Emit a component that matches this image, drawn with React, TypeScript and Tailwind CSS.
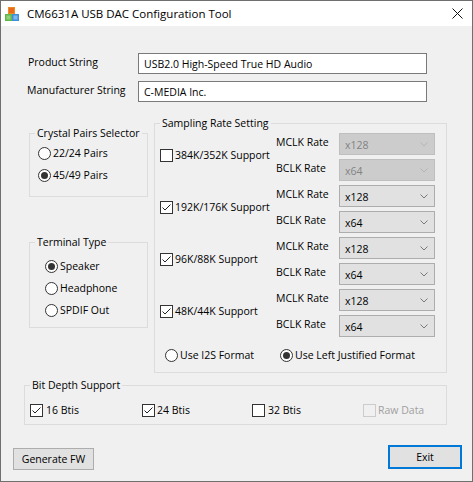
import React from "react";

function Check({ checked, disabled }: { checked?: boolean; disabled?: boolean }) {
  return (
    <span
      className={`w-[13px] h-[13px] border flex items-center justify-center shrink-0 ${
        disabled ? "border-[#cccccc] bg-[#f0f0f0]" : "border-[#333333] bg-white"
      }`}
    >
      {checked && (
        <svg width="11" height="11" viewBox="0 0 11 11">
          <path d="M1.5 5.5 L4 8 L9.5 2.5" fill="none" stroke="#222" strokeWidth="1" />
        </svg>
      )}
    </span>
  );
}

function Radio({ checked }: { checked?: boolean }) {
  return (
    <span className="w-[13px] h-[13px] rounded-full border border-[#333333] bg-white flex items-center justify-center shrink-0">
      {checked && <span className="w-[7px] h-[7px] rounded-full bg-[#333333]" />}
    </span>
  );
}

function Combo({ value, disabled }: { value: string; disabled?: boolean }) {
  return (
    <div
      className={`w-[96px] h-[22px] border flex items-center justify-between pl-[5px] pr-[6px] ${
        disabled
          ? "bg-[#cccccc] border-[#bfbfbf] text-[#838383]"
          : "bg-[#e1e1e1] border-[#adadad] text-black"
      }`}
    >
      <span className="pt-[2px]">{value}</span>
      <svg width="8" height="5" viewBox="0 0 8 5">
        <path
          d="M0.5 0.5 L4 4 L7.5 0.5"
          fill="none"
          stroke={disabled ? "#b5b5b5" : "#7a7a7a"}
          strokeWidth="1"
        />
      </svg>
    </div>
  );
}

function Pair({ label, checked, disabled }: { label: string; checked?: boolean; disabled?: boolean }) {
  return (
    <div className="flex h-[52px]">
      <div className="w-[116px] flex items-center gap-[2px] pb-[4px]">
        <Check checked={checked} />
        <span>{label}</span>
      </div>
      <div className="flex flex-col">
        <div className="h-[26px] flex items-center">
          <span className="w-[63px] pb-[4px]">MCLK Rate</span>
          <Combo value="x128" disabled={disabled} />
        </div>
        <div className="h-[26px] flex items-center">
          <span className="w-[63px] pb-[4px]">BCLK Rate</span>
          <Combo value="x64" disabled={disabled} />
        </div>
      </div>
    </div>
  );
}

function Legend({ children }: { children: React.ReactNode }) {
  return <legend className="ml-[5px] px-[2px] leading-[14px]">{children}</legend>;
}

export default function App() {
  return (
    <div className="w-[473px] h-[482px] border border-[#6f6f6f] bg-[#f0f0f0] flex flex-col text-[10.5px] text-black font-['Open_Sans','Noto_Sans',sans-serif] leading-[14px] overflow-hidden">
      {/* Title bar */}
      <div className="h-[25px] bg-white flex items-center shrink-0">
        <svg className="ml-[3px]" width="16" height="16" viewBox="0 0 16 16">
          <rect x="4" y="1" width="7" height="7" fill="#f08a24" />
          <rect x="5" y="2" width="5" height="5" fill="#e86a1a" />
          <rect x="1" y="8" width="7" height="7" fill="#5fb94a" />
          <rect x="8" y="8" width="7" height="7" fill="#3f8fd8" />
          <rect x="2.5" y="9.5" width="4" height="4" fill="#8fd27a" />
          <rect x="9.5" y="9.5" width="4" height="4" fill="#7fb8ec" />
        </svg>
        <span className="ml-[7px] text-[11.5px]">CM6631A USB DAC Configuration Tool</span>
        <svg className="ml-auto mr-[9px]" width="11" height="11" viewBox="0 0 11 11">
          <path d="M0.5 0.5 L10.5 10.5 M10.5 0.5 L0.5 10.5" stroke="#111" strokeWidth="1" />
        </svg>
      </div>

      {/* Body */}
      <div className="flex flex-col">
        <div className="flex items-center mt-[27px] pl-[27px]">
          <span className="w-[110px] pb-[4px]">Product String</span>
          <div className="w-[289px] h-[21px] border border-[#7a7a7a] bg-white flex items-center pl-[5px]">
            USB2.0 High-Speed True HD Audio
          </div>
        </div>
        <div className="flex items-center mt-[7px] pl-[26px]">
          <span className="w-[111px] pb-[3px]">Manufacturer String</span>
          <div className="w-[289px] h-[21px] border border-[#7a7a7a] bg-white flex items-center pl-[5px]">
            C-MEDIA Inc.
          </div>
        </div>

        {/* Main area */}
        <div className="flex mt-[14px] pl-[28px] gap-[6px]">
          <div className="w-[119px] flex flex-col">
            <fieldset className="mt-[10px] border border-[#dcdcdc] h-[71px]">
              <Legend>Crystal Pairs Selector</Legend>
              <div className="flex flex-col pl-[8px] pt-[2px]">
                <div className="h-[22px] flex items-center gap-[2px]">
                  <Radio />
                  <span>22/24 Pairs</span>
                </div>
                <div className="h-[22px] flex items-center gap-[2px]">
                  <Radio checked />
                  <span>45/49 Pairs</span>
                </div>
              </div>
            </fieldset>
            <fieldset className="mt-[38px] border border-[#dcdcdc] h-[93px]">
              <Legend>Terminal Type</Legend>
              <div className="flex flex-col pl-[15px] pt-[6px]">
                <div className="h-[22px] flex items-center gap-[2px]">
                  <Radio checked />
                  <span>Speaker</span>
                </div>
                <div className="h-[22px] flex items-center gap-[2px]">
                  <Radio />
                  <span>Headphone</span>
                </div>
                <div className="h-[22px] flex items-center gap-[2px]">
                  <Radio />
                  <span>SPDIF Out</span>
                </div>
              </div>
            </fieldset>
          </div>

          <fieldset className="w-[293px] h-[257px] border border-[#dcdcdc]">
            <Legend>Sampling Rate Setting</Legend>
            <div className="flex flex-col pl-[5px] pt-[1px]">
              <Pair label="384K/352K Support" disabled />
              <Pair label="192K/176K Support" checked />
              <Pair label="96K/88K Support" checked />
              <Pair label="48K/44K Support" checked />
              <div className="flex mt-[6px] h-[20px] items-center">
                <div className="w-[120px] pl-[5px] flex items-center gap-[2px]">
                  <Radio />
                  <span>Use I2S Format</span>
                </div>
                <div className="flex items-center gap-[2px]">
                  <Radio checked />
                  <span>Use Left Justified Format</span>
                </div>
              </div>
            </div>
          </fieldset>
        </div>

        {/* Bit depth */}
        <fieldset className="mt-[5px] ml-[23px] w-[423px] h-[47px] border border-[#dcdcdc]">
          <Legend>Bit Depth Support</Legend>
          <div className="flex items-center h-[20px] mt-[8px] pl-[5px]">
            <div className="w-[112px] flex items-center gap-[3px]">
              <Check checked />
              <span>16 Btis</span>
            </div>
            <div className="w-[110px] flex items-center gap-[2px]">
              <Check checked />
              <span>24 Btis</span>
            </div>
            <div className="w-[111px] flex items-center gap-[3px]">
              <Check />
              <span>32 Btis</span>
            </div>
            <div className="flex items-center gap-[2px] text-[#a0a0a0]">
              <Check disabled />
              <span>Raw Data</span>
            </div>
          </div>
        </fieldset>

        {/* Buttons */}
        <div className="flex items-start justify-between mt-[20px] pl-[12px] pr-[10px]">
          <button className="mt-[3px] w-[81px] h-[22px] bg-[#e1e1e1] border border-[#adadad] flex items-center justify-center">
            Generate FW
          </button>
          <button className="w-[74px] h-[24px] bg-[#e1e1e1] border-2 border-[#0078d7] flex items-center justify-center">
            Exit
          </button>
        </div>
      </div>
    </div>
  );
}
